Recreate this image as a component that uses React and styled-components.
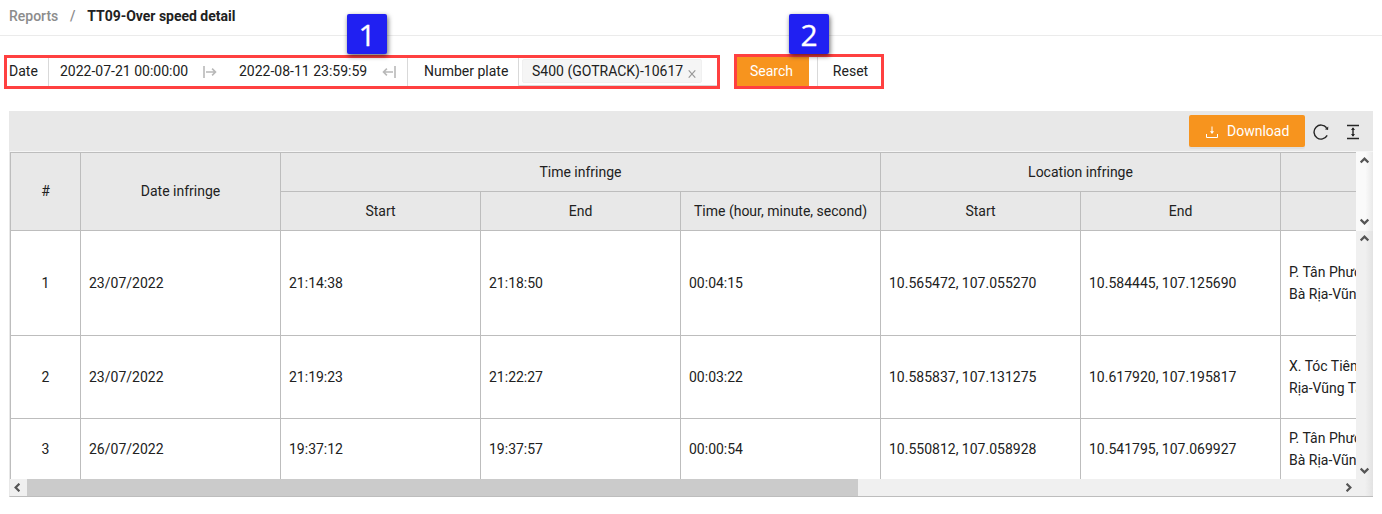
import React from "react";
import styled, { createGlobalStyle, css } from "styled-components";

const GlobalStyle = createGlobalStyle`
  * { box-sizing: border-box; }
  body {
    margin: 0;
    background: #fff;
    color: #212121;
    font: 14px/22px Roboto, "Liberation Sans", sans-serif;
    overflow: hidden;
  }
`;

const line = "#bdbdbd";
const orange = "#f7941e";

const Page = styled.div`
  width: 1382px;
  height: 514px;
  overflow: hidden;
`;

const Breadcrumb = styled.header`
  display: flex;
  height: 36px;
  padding: 5px 9px 0;
  border-bottom: 1px solid #ebebeb;
  font-weight: 500;
`;
const Crumb = styled.span`
  color: ${(p) => (p.$current ? "#212121" : "#8c8c8c")};
  ${(p) => p.$current && css`font-weight: 700; letter-spacing: -0.02px;`}
`;
const Slash = styled.span`
  width: 29px;
  text-align: center;
  color: #8c8c8c;
`;

const Filters = styled.section`
  display: flex;
  align-items: flex-end;
  gap: 14px;
  height: 53px;
  padding-left: 4px;
`;
const Highlight = styled.div`
  position: relative;
  display: flex;
  width: ${(p) => p.$width}px;
  height: ${(p) => p.$height}px;
  border: 3px solid #ff4040;
`;
const Badge = styled.div`
  position: absolute;
  top: ${(p) => p.$top}px;
  left: ${(p) => p.$left}px;
  z-index: 2;
  width: 40px;
  height: 40px;
  border-radius: 2px;
  background: #2020f2;
  box-shadow: 1px 2px 5px rgba(0, 0, 0, 0.6);
  color: #fff;
  font: 30px/41px "Open Sans", sans-serif;
  -webkit-text-stroke: 0.3px #fff;
  text-align: center;
`;
const Label = styled.div`
  width: ${(p) => p.$width}px;
  padding-left: ${(p) => p.$indent}px;
  border-right: 1px solid #d9d9d9;
  line-height: 26px;
  white-space: nowrap;
`;
const DateRange = styled.div`
  display: flex;
  align-items: center;
  width: 359px;
  padding-left: 11px;
  border-right: 1px solid #d9d9d9;
`;
const DateValue = styled.span`
  width: ${(p) => p.$width}px;
  line-height: 26px;
  margin-bottom: 2px;
  white-space: nowrap;
`;
const RangeIcon = styled.svg`
  width: 14px;
  height: 14px;
  margin: 0 ${(p) => p.$gap || 0}px 1px 0;
  fill: none;
  stroke: #b8b8b8;
  stroke-width: 1.6;
`;
const PlateField = styled.div`
  flex: 1;
  padding: 1px 0 0 3px;
  border-bottom: 1px solid #d9d9d9;
`;
const Tag = styled.div`
  display: flex;
  width: 180px;
  height: 24px;
  padding-left: 9px;
  border: 1px solid #f0f0f0;
  border-radius: 2px;
  background: #f5f5f5;
  white-space: nowrap;
`;
const TagClose = styled.svg`
  width: 8px;
  height: 8px;
  margin: 10px 0 0 5px;
  stroke: #999;
  stroke-width: 1.1;
`;
const ActionButton = styled.button`
  width: ${(p) => p.$width}px;
  padding: ${(p) => (p.$primary ? "0 3px 1px 0" : "0 0 1px 2px")};
  border: 0;
  border-left: ${(p) => (p.$primary ? "0" : "1px solid #d9d9d9")};
  margin-left: ${(p) => (p.$primary ? 0 : 8)}px;
  background: ${(p) => (p.$primary ? orange : "#fff")};
  color: ${(p) => (p.$primary ? "#fff" : "#212121")};
  font: inherit;
`;

const Report = styled.section`
  width: 1364px;
  margin: 22px 0 0 9px;
`;
const Toolbar = styled.div`
  display: flex;
  align-items: center;
  justify-content: flex-end;
  height: 40px;
  padding-right: 12px;
  background: #e8e8e8;
`;
const DownloadButton = styled.button`
  display: flex;
  align-items: center;
  width: 116px;
  height: 32px;
  padding: 0 0 0 16px;
  border: 0;
  border-radius: 2px;
  background: ${orange};
  box-shadow: 0 2px 0 rgba(0, 0, 0, 0.04);
  color: #fff;
  font: inherit;
  svg { margin: 2px 8px 0 0; }
`;
const ToolIcon = styled.svg`
  width: 16px;
  height: 16px;
  margin-left: ${(p) => p.$gap}px;
  margin-top: 2px;
  fill: none;
  stroke: #262626;
`;

const TableFrame = styled.div`
  border-left: 1px solid #e8e8e8;
  border-top: 1px solid #f5f5f5;
  border-bottom: 1px solid ${line};
`;
const Pane = styled.div`
  display: flex;
  height: ${(p) => p.$height}px;
`;
const columns = "70px repeat(6, 200px) 1fr";
const HeadGrid = styled.div`
  flex: 1;
  min-width: 0;
  display: grid;
  grid-template-columns: ${columns};
  grid-template-rows: 39px 39px;
  border-top: 1px solid ${line};
  border-left: 1px solid ${line};
  background: #e8e8e8;
`;
const HeadCell = styled.div`
  display: flex;
  align-items: center;
  justify-content: center;
  grid-column: span ${(p) => p.$cols || 1};
  grid-row: span ${(p) => p.$rows || 1};
  padding-bottom: ${(p) => (p.$rows ? 1 : 0)}px;
  border-right: ${(p) => (p.$last ? 0 : 1)}px solid ${line};
  border-bottom: 1px solid ${line};
  white-space: nowrap;
`;
const BodyGrid = styled.div`
  flex: 1;
  min-width: 0;
  display: grid;
  grid-template-columns: ${columns};
  grid-template-rows: 105px 83px 60px;
  border-left: 1px solid ${line};
`;
const Cell = styled.div`
  display: flex;
  align-items: center;
  justify-content: ${(p) => (p.$center ? "center" : "flex-start")};
  min-width: 0;
  padding-left: ${(p) => (p.$center ? 0 : 8)}px;
  border-right: ${(p) => (p.$last ? 0 : 1)}px solid ${line};
  border-bottom: ${(p) => (p.$bottom ? 0 : 1)}px solid ${line};
  overflow: hidden;
  white-space: pre;
`;
const VerticalScroll = styled.div`
  display: flex;
  flex-direction: column;
  align-items: center;
  justify-content: space-between;
  width: 17px;
  padding: ${(p) => (p.$light ? "4px 0 5px" : "3px 0 4px")};
  background: ${(p) =>
    p.$light
      ? "linear-gradient(to right, #fafafa 55%, #e9e9e9)"
      : "linear-gradient(to right, #f0f0f0 55%, #e2e2e2)"};
`;
const HorizontalScroll = styled.div`
  display: flex;
  align-items: center;
  height: 17px;
  background: linear-gradient(to right, #f0f0f0 1355px, #e2e2e2);
`;
const ScrollThumb = styled.div`
  width: 831px;
  height: 17px;
  margin-right: auto;
  background: #cbcbcb;
`;
const Arrow = styled.svg`
  flex: none;
  width: 9px;
  height: 9px;
  margin: ${(p) => p.$margin || 0};
  transform: rotate(${(p) => p.$turn || 0}deg);
  fill: none;
  stroke: #555;
  stroke-width: 2.2;
`;

const ScrollArrow = (props) => (
  <Arrow viewBox="0 0 9 9" {...props}>
    <path d="M.7 6.4 4.5 2.6l3.8 3.8" />
  </Arrow>
);

const rows = [
  ["1", "23/07/2022", "21:14:38", "21:18:50", "00:04:15", "10.565472, 107.055270", "10.584445, 107.125690", "P. Tân Phước,\nBà Rịa-Vũng Tàu"],
  ["2", "23/07/2022", "21:19:23", "21:22:27", "00:03:22", "10.585837, 107.131275", "10.617920, 107.195817", "X. Tóc Tiên, Bà\nRịa-Vũng Tàu"],
  ["3", "26/07/2022", "19:37:12", "19:37:57", "00:00:54", "10.550812, 107.058928", "10.541795, 107.069927", "P. Tân Phước,\nBà Rịa-Vũng Tàu"],
];

export default function App() {
  return (
    <Page>
      <GlobalStyle />
      <Breadcrumb>
        <Crumb>Reports</Crumb>
        <Slash>/</Slash>
        <Crumb $current>TT09-Over speed detail</Crumb>
      </Breadcrumb>

      <Filters>
        <Highlight $width={716} $height={34}>
          <Badge $left={340} $top={-44}>1</Badge>
          <Label $width={42} $indent={2}>Date</Label>
          <DateRange>
            <DateValue $width={143}>2022-07-21 00:00:00</DateValue>
            <RangeIcon viewBox="0 0 14 14" $gap={22}>
              <path d="M1 1v12M3 7h9.5M9.1 3.6 12.5 7l-3.4 3.4" />
            </RangeIcon>
            <DateValue $width={143}>2022-08-11 23:59:59</DateValue>
            <RangeIcon viewBox="0 0 14 14">
              <path d="M13 1v12M11 7H1.5M4.9 3.6 1.5 7l3.4 3.4" />
            </RangeIcon>
          </DateRange>
          <Label $width={111} $indent={16}>Number plate</Label>
          <PlateField>
            <Tag>
              S400 (GOTRACK)-10617
              <TagClose viewBox="0 0 8 8"><path d="m.7.3 6.6 7.4M7.3.3.7 7.7" /></TagClose>
            </Tag>
          </PlateField>
        </Highlight>
        <Highlight $width={150} $height={35}>
          <Badge $left={52} $top={-43}>2</Badge>
          <ActionButton $primary $width={72}>Search</ActionButton>
          <ActionButton $width={64}>Reset</ActionButton>
        </Highlight>
      </Filters>

      <Report>
        <Toolbar>
          <DownloadButton>
            <svg width="14" height="14" viewBox="0 0 14 14" fill="none" stroke="#fff" strokeWidth="1">
              <path d="M7 1.5v5.5M1.5 9v3.5h11V9" />
              <path d="M4.9 6.3h4.2L7 9z" fill="#fff" stroke="none" />
            </svg>
            Download
          </DownloadButton>
          <ToolIcon viewBox="0 0 16 16" $gap={8} strokeWidth="1.4">
            <path d="M14.2 11.4A7 7 0 1 1 13.6 3.8" />
            <path d="m15.3 2.6-.2 3.5-3.2-.8z" fill="#262626" stroke="none" />
          </ToolIcon>
          <ToolIcon viewBox="0 0 16 16" $gap={16} strokeWidth="1.4">
            <path d="M2 1.5h12M2 14.5h12M8 4v8" />
            <path d="M8 3.2 10 6H6zM8 12.8 10 10H6z" fill="#262626" stroke="none" />
          </ToolIcon>
        </Toolbar>

        <TableFrame>
          <Pane $height={79}>
            <HeadGrid>
              <HeadCell $rows={2}>#</HeadCell>
              <HeadCell $rows={2}>Date infringe</HeadCell>
              <HeadCell $cols={3}>Time infringe</HeadCell>
              <HeadCell $cols={2}>Location infringe</HeadCell>
              <HeadCell $last />
              <HeadCell>Start</HeadCell>
              <HeadCell>End</HeadCell>
              <HeadCell>Time (hour, minute, second)</HeadCell>
              <HeadCell>Start</HeadCell>
              <HeadCell>End</HeadCell>
              <HeadCell $last />
            </HeadGrid>
            <VerticalScroll $light>
              <ScrollArrow />
              <ScrollArrow $turn={180} />
            </VerticalScroll>
          </Pane>
          <Pane $height={248}>
            <BodyGrid>
              {rows.map((row, r) =>
                row.map((text, c) => (
                  <Cell key={`${r}-${c}`} $center={c === 0} $last={c === 7} $bottom={r === 2}>
                    {text}
                  </Cell>
                ))
              )}
            </BodyGrid>
            <VerticalScroll>
              <ScrollArrow />
              <ScrollArrow $turn={180} />
            </VerticalScroll>
          </Pane>
          <HorizontalScroll>
            <ScrollArrow $turn={-90} $margin="0 5px 0 3px" />
            <ScrollThumb />
            <ScrollArrow $turn={90} $margin="0 20px 0 0" />
          </HorizontalScroll>
        </TableFrame>
      </Report>
    </Page>
  );
}
